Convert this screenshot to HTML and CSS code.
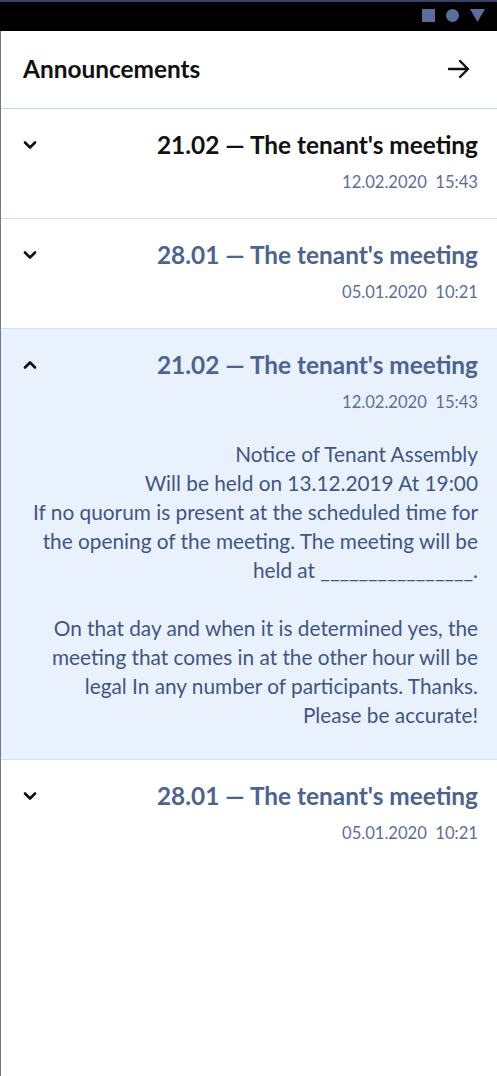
FILE: index.html
```html
<!DOCTYPE html>
<html>
<head>
<meta charset="utf-8">
<link rel="stylesheet" href="styles.css">
</head>
<body>
<div class="screen">
  <div class="statusbar">
    <span class="sb-square"></span>
    <span class="sb-circle"></span>
    <svg class="sb-tri" width="15" height="13" viewBox="0 0 15 13"><polygon points="0,0 15,0 7.5,13" fill="#5a6e9e"/></svg>
  </div>
  <div class="app">
    <header class="header">
      <h1 class="header-title">Announcements</h1>
      <svg class="header-arrow" width="24" height="20" viewBox="0 0 24 20"><path d="M2 10H21M13 2L21 10L13 18" fill="none" stroke="#111" stroke-width="2.4" stroke-linecap="round" stroke-linejoin="round"/></svg>
    </header>
    <div class="list">
      <div class="item">
        <div class="item-head">
          <svg class="chev" width="14" height="10" viewBox="0 0 14 10"><path d="M2 2.5L7 7.5L12 2.5" fill="none" stroke="#111" stroke-width="2.6" stroke-linecap="round" stroke-linejoin="round"/></svg>
          <div class="item-body">
            <div class="item-title unread">21.02 — The tenant's meeting</div>
            <div class="item-date">12.02.2020&nbsp; 15:43</div>
          </div>
        </div>
      </div>
      <div class="item">
        <div class="item-head">
          <svg class="chev" width="14" height="10" viewBox="0 0 14 10"><path d="M2 2.5L7 7.5L12 2.5" fill="none" stroke="#111" stroke-width="2.6" stroke-linecap="round" stroke-linejoin="round"/></svg>
          <div class="item-body">
            <div class="item-title">28.01 — The tenant's meeting</div>
            <div class="item-date">05.01.2020&nbsp; 10:21</div>
          </div>
        </div>
      </div>
      <div class="item open">
        <div class="item-head">
          <svg class="chev" width="14" height="10" viewBox="0 0 14 10"><path d="M2 7.5L7 2.5L12 7.5" fill="none" stroke="#111" stroke-width="2.6" stroke-linecap="round" stroke-linejoin="round"/></svg>
          <div class="item-body">
            <div class="item-title">21.02 — The tenant's meeting</div>
            <div class="item-date">12.02.2020&nbsp; 15:43</div>
          </div>
        </div>
        <div class="item-text">
          <p>Notice of Tenant Assembly<br>Will be held on 13.12.2019 At 19:00<br>If no quorum is present at the scheduled time for<br>the opening of the meeting. The meeting will be<br>held at ________________.</p>
          <p>On that day and when it is determined yes, the<br>meeting that comes in at the other hour will be<br>legal In any number of participants. Thanks.<br>Please be accurate!</p>
        </div>
      </div>
      <div class="item last">
        <div class="item-head">
          <svg class="chev" width="14" height="10" viewBox="0 0 14 10"><path d="M2 2.5L7 7.5L12 2.5" fill="none" stroke="#111" stroke-width="2.6" stroke-linecap="round" stroke-linejoin="round"/></svg>
          <div class="item-body">
            <div class="item-title">28.01 — The tenant's meeting</div>
            <div class="item-date">05.01.2020&nbsp; 10:21</div>
          </div>
        </div>
      </div>
    </div>
  </div>
</div>
</body>
</html>
```
FILE: styles.css
```css
* { box-sizing: border-box; }
html, body { margin: 0; padding: 0; background: #fff; }
body { font-family: "Lato", "Open Sans", sans-serif; }
.screen {
  width: 497px;
  height: 1076px;
  display: flex;
  flex-direction: column;
  overflow: hidden;
}
.statusbar {
  height: 31px;
  background: #000;
  border-top: 2px solid #34446a;
  display: flex;
  align-items: center;
  justify-content: flex-end;
  gap: 11px;
  padding: 0 12px 2px 0;
  flex-shrink: 0;
}
.sb-square { width: 13px; height: 13px; background: #5a6e9e; display: block; }
.sb-circle { width: 13px; height: 13px; border-radius: 50%; background: #5a6e9e; display: block; }
.sb-tri { display: block; }
.app {
  flex: 1;
  border-left: 1px solid #6c7a9a;
  display: flex;
  flex-direction: column;
}
.header {
  height: 78px;
  display: flex;
  align-items: center;
  justify-content: space-between;
  padding: 0 26px 2px 22px;
  border-bottom: 1px solid #c5d4ee;
}
.header-title {
  margin: 0;
  font-size: 24.4px;
  font-weight: 700;
  color: #111;
}
.header-arrow { display: block; }
.list { display: flex; flex-direction: column; }
.item {
  padding: 21px 19px 25px 22px;
  border-bottom: 1px solid #d6e0f2;
}
.item.last { border-bottom: none; }
.item.open { background: #e9f1fc; padding-bottom: 30px; }
.item-head { display: flex; align-items: flex-start; }
.chev { display: block; margin-top: 10px; flex-shrink: 0; }
.item-body { flex: 1; text-align: right; }
.item-title {
  font-size: 24.4px;
  line-height: 30px;
  font-weight: 700;
  color: #4b6491;
}
.item-title.unread { color: #111; }
.item-date {
  margin-top: 11px;
  font-size: 16.6px;
  line-height: 22px;
  color: #5a6e9e;
}
.item-text {
  margin-top: 26px;
  font-size: 20.8px;
  line-height: 29px;
  color: #3f5685;
  text-align: right;
}
.item-text p { margin: 0; }
.item-text p + p { margin-top: 29px; }
```
